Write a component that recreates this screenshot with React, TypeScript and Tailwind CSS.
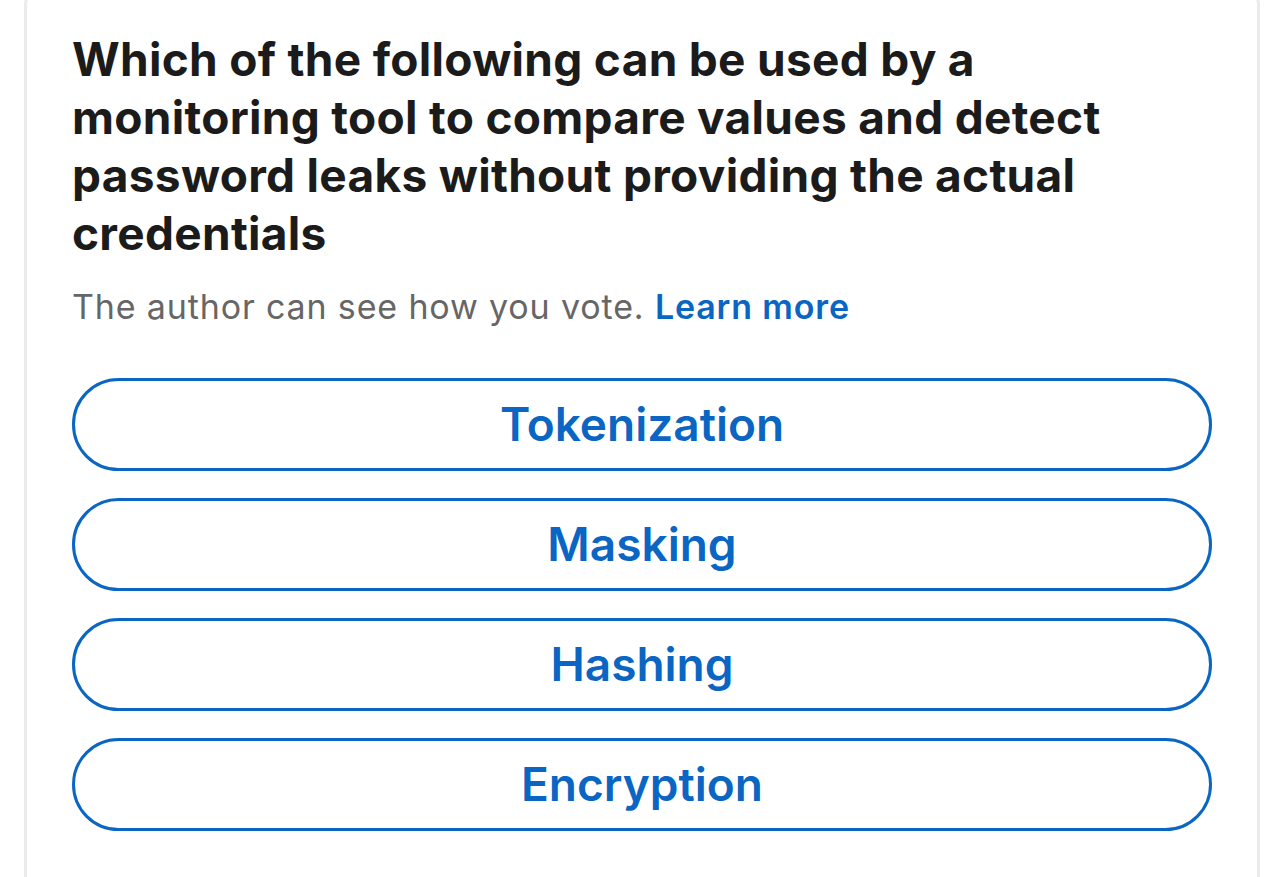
import React from "react";

const options = ["Tokenization", "Masking", "Hashing", "Encryption"];

export default function App() {
  return (
    <div className="min-h-[877px] w-full bg-white overflow-hidden" style={{ fontFamily: "Inter, 'Noto Sans', sans-serif" }}>
      <div className="ml-[24px] mr-[24px] -mt-[8px] h-[900px] rounded-t-[12px] border-[3px] border-b-0 border-[#ebebeb] bg-white px-[45px] pt-[35px]">
        <h1 className="text-[46px] leading-[58px] font-bold text-[#1b1b1b] tracking-[0.3px] pr-[60px]">
          Which of the following can be used by a monitoring tool to compare values and detect password leaks without providing the actual credentials
        </h1>
        <p className="mt-[23px] text-[34px] leading-[44px] text-[#666666] tracking-[0.85px]">
          The author can see how you vote. <span className="font-semibold text-[#0a66c2]">Learn more</span>
        </p>
        <div className="mt-[49px] flex flex-col gap-[27px]">
          {options.map((o) => (
            <button
              key={o}
              className="h-[93px] w-full rounded-full border-[3px] border-[#0a66c2] bg-white text-[46px] font-semibold text-[#0a66c2] flex items-center justify-center"
            >
              {o}
            </button>
          ))}
        </div>
      </div>
    </div>
  );
}
